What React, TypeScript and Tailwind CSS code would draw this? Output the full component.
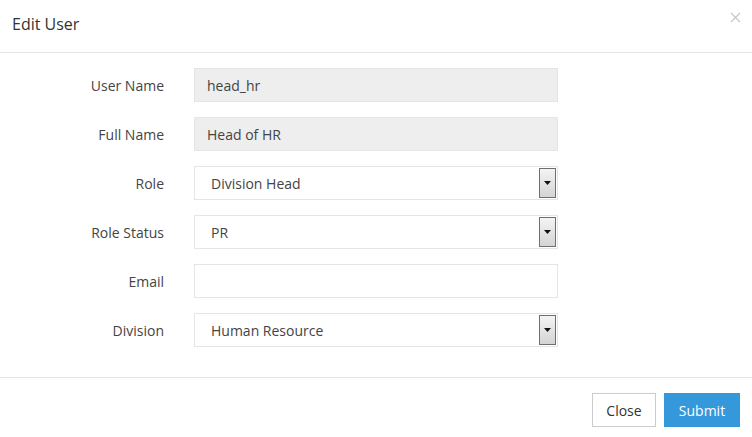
import React from "react";

function SelectArrow() {
  return (
    <div className="absolute right-[1px] top-[1px] bottom-[1px] w-[17px] border border-[#6f6f6f] bg-gradient-to-b from-[#f4f4f4] to-[#d4d4d4] flex items-center justify-center">
      <svg width="7" height="4" viewBox="0 0 7 4">
        <polygon points="0,0 7,0 3.5,4" fill="#111" />
      </svg>
    </div>
  );
}

function Row({
  label,
  value,
  kind,
}: {
  label: string;
  value?: string;
  kind: "readonly" | "select" | "input";
}) {
  return (
    <div className="flex items-center h-[34px]">
      <div className="w-[164px] text-right text-[14px] text-[#444]">{label}</div>
      <div
        className={
          "relative ml-[30px] w-[364px] h-[34px] border border-[#e5e5e5] flex items-center text-[14px] text-[#444] " +
          (kind === "readonly" ? "bg-[#eeeeee] pl-[12px]" : "bg-white pl-[16px]")
        }
      >
        {value}
        {kind === "select" && <SelectArrow />}
      </div>
    </div>
  );
}

export default function App() {
  return (
    <div
      className="w-[752px] h-[437px] bg-white overflow-hidden"
      style={{ fontFamily: '"Open Sans", "Liberation Sans", sans-serif' }}
    >
      <div className="h-[53px] border-b border-[#e5e5e5] flex items-center justify-between pl-[12px] pr-[11px]">
        <div className="text-[16px] text-[#333] -mt-[4px]">Edit User</div>
        <svg width="11" height="11" viewBox="0 0 11 11" className="-mt-[17px]">
          <path d="M1 1 L10 10 M10 1 L1 10" stroke="#c8c8c8" strokeWidth="1.3" />
        </svg>
      </div>
      <div className="pt-[15px] pb-[30px] flex flex-col gap-[15px]">
        <Row label="User Name" value="head_hr" kind="readonly" />
        <Row label="Full Name" value="Head of HR" kind="readonly" />
        <Row label="Role" value="Division Head" kind="select" />
        <Row label="Role Status" value="PR" kind="select" />
        <Row label="Email" value="" kind="input" />
        <Row label="Division" value="Human Resource" kind="select" />
      </div>
      <div className="border-t border-[#e5e5e5] pt-[15px] pr-[12px] flex justify-end gap-[8px]">
        <button className="w-[64px] h-[34px] border border-[#cccccc] bg-white text-[14px] text-[#333]">
          Close
        </button>
        <button className="w-[76px] h-[34px] bg-[#3498db] text-[14px] text-white">
          Submit
        </button>
      </div>
    </div>
  );
}
